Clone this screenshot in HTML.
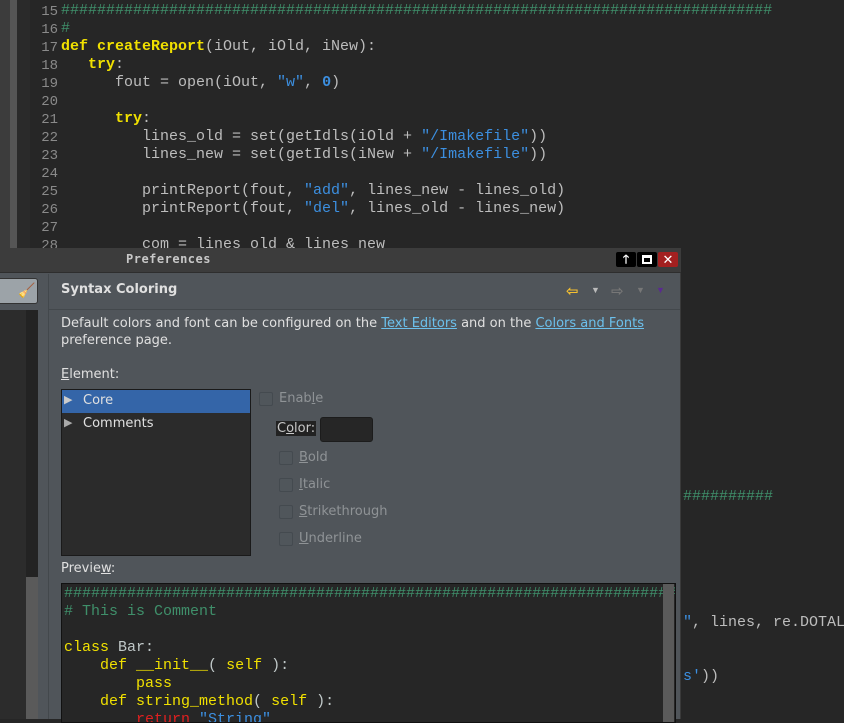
<!DOCTYPE html>
<html><head><meta charset="utf-8"><style>
*{margin:0;padding:0;box-sizing:border-box}
body{width:844px;height:719px;overflow:hidden;background:#262626;position:relative;font-family:"Liberation Sans","DejaVu Sans",sans-serif}
.ab{position:absolute}
.mono{font-family:"Liberation Mono","DejaVu Sans Mono",monospace;font-size:15px;white-space:pre}
.ln{position:absolute;left:30px;width:28px;text-align:right;color:#8a8a8a;font-family:"Liberation Mono",monospace;font-size:14px;line-height:18px}
.code{position:absolute;left:61px;color:#bdbdbd;line-height:18px}
.k{color:#f0e000;font-weight:bold}
.s{color:#3c8fe0}
.c{color:#3f8f6a}
.n{color:#3c8fe0;font-weight:bold}
.dl{font-family:"DejaVu Sans","Liberation Sans",sans-serif;font-size:13px;color:#e0e0e0}
.cb{position:absolute;width:14px;height:14px;border:1px solid #444a4f;border-radius:2px;background:#50565b}
.dis{color:#8f9396}
a{color:#6cc0ec;text-decoration:underline}
.pv{font-family:"Liberation Mono",monospace;font-size:15px;line-height:18px;white-space:pre;color:#c0c8c8}
</style></head><body>
<div class="ab" style="left:0;top:0;width:10px;height:248px;background:#3c3c3c"></div>
<div class="ab" style="left:10px;top:0;width:7px;height:248px;background:#555"></div>
<div class="ab" style="left:17px;top:0;width:13px;height:248px;background:#2a2a2a"></div>
<div class="ln" style="top:3px">15<br>16<br>17<br>18<br>19<br>20<br>21<br>22<br>23<br>24<br>25<br>26<br>27<br>28</div>
<div class="code mono" style="top:2px"><span class="c">###############################################################################</span>
<span class="c">#</span>
<span class="k">def createReport</span>(iOut, iOld, iNew):
   <span class="k">try</span>:
      fout = open(iOut, <span class="s">"w"</span>, <span class="n">0</span>)

      <span class="k">try</span>:
         lines_old = set(getIdls(iOld + <span class="s">"/Imakefile"</span>))
         lines_new = set(getIdls(iNew + <span class="s">"/Imakefile"</span>))

         printReport(fout, <span class="s">"add"</span>, lines_new - lines_old)
         printReport(fout, <span class="s">"del"</span>, lines_old - lines_new)

         com = lines_old &amp; lines_new</div>
<div class="mono ab c" style="left:683px;top:488px;line-height:18px">##########</div>
<div class="mono ab" style="left:683px;top:614px;color:#bdbdbd"><span class="s">"</span>, lines, re.DOTAL</div>
<div class="mono ab" style="left:683px;top:668px;color:#bdbdbd"><span class="s">s'</span>))</div>

<!-- dialog -->
<div class="ab" style="left:0;top:248px;width:681px;height:471px;background:#50555a;border-right:1px solid #3a3a3a"></div>
<div class="ab" style="left:0;top:248px;width:681px;height:25px;background:#3c3c3c;border-bottom:1px solid #2e2e2e"></div>
<div class="ab" style="left:126px;top:252px;font-family:'DejaVu Sans Mono','Liberation Mono',monospace;font-weight:bold;font-size:12px;color:#c8c8c8;letter-spacing:.5px">Preferences</div>
<div class="ab" style="left:616px;top:252px;width:20px;height:15px;background:#000;border-radius:2px;color:#fff;font-size:12px;text-align:center;line-height:15px;font-weight:bold">🡑</div>
<div class="ab" style="left:637px;top:252px;width:20px;height:15px;background:#000;border-radius:2px"><div class="ab" style="left:5px;top:3px;width:10px;height:9px;border:2px solid #fff;border-top-width:3px"></div></div>
<div class="ab" style="left:658px;top:252px;width:20px;height:15px;background:#a32020;border-radius:2px;color:#fff;font-size:13px;font-weight:bold;text-align:center;line-height:15px">✕</div>
<!-- left panel -->
<div class="ab" style="left:0;top:278px;width:38px;height:26px;background:#9ca3a8;border:1px solid #333;border-left:none;border-radius:0 3px 3px 0"></div>
<div class="ab" style="left:18px;top:282px;font-size:14px;color:#e8c020">🧹</div>
<div class="ab" style="left:0;top:310px;width:38px;height:409px;background:#2c2c2c"></div>
<div class="ab" style="left:26px;top:310px;width:12px;height:307px;background:#232323"></div>
<div class="ab" style="left:26px;top:577px;width:12px;height:142px;background:#5a5a5a"></div>
<div class="ab" style="left:48px;top:274px;width:1px;height:445px;background:#43484c"></div>
<!-- header -->
<div class="ab dl" style="left:61px;top:282px;font-weight:bold;font-size:13px">Syntax Coloring</div>
<div class="ab" style="left:49px;top:309px;width:631px;height:1px;background:#43484c"></div>
<div class="ab" style="left:566px;top:282px;color:#f5c030;font-size:15px;font-weight:bold">⇦</div>
<div class="ab" style="left:591px;top:285px;color:#bbb;font-size:9px">▼</div>
<div class="ab" style="left:611px;top:282px;color:#777;font-size:15px;font-weight:bold">⇨</div>
<div class="ab" style="left:636px;top:285px;color:#777;font-size:9px">▼</div>
<div class="ab" style="left:656px;top:285px;color:#5a2a90;font-size:9px">▼</div>
<div class="ab dl" style="left:61px;top:315px;line-height:17px">Default colors and font can be configured on the <a>Text Editors</a> and on the <a>Colors and Fonts</a><br>preference page.</div>
<div class="ab dl" style="left:61px;top:367px"><u>E</u>lement:</div>
<!-- list -->
<div class="ab" style="left:61px;top:389px;width:190px;height:167px;background:#2b2b2b;border:1px solid #1a1a1a"></div>
<div class="ab" style="left:62px;top:390px;width:188px;height:23px;background:#3465a8"></div>
<div class="ab dl" style="left:64px;top:393px;color:#ccc;font-size:11px">▶</div>
<div class="ab dl" style="left:83px;top:393px">Core</div>
<div class="ab dl" style="left:64px;top:416px;color:#aaa;font-size:11px">▶</div>
<div class="ab dl" style="left:83px;top:416px">Comments</div>
<div class="cb" style="left:259px;top:392px"></div>
<div class="ab dl dis" style="left:279px;top:391px">Enab<u>l</u>e</div>
<div class="ab dl" style="left:276px;top:421px;background:#222;color:#c8c8c8;padding:0 1px">C<u>o</u>lor:</div>
<div class="ab" style="left:320px;top:417px;width:53px;height:25px;background:#262626;border:1px solid #1c1c1c;border-radius:3px"></div>
<div class="cb" style="left:279px;top:451px"></div><div class="ab dl dis" style="left:299px;top:450px"><u>B</u>old</div>
<div class="cb" style="left:279px;top:478px"></div><div class="ab dl dis" style="left:299px;top:477px"><u>I</u>talic</div>
<div class="cb" style="left:279px;top:505px"></div><div class="ab dl dis" style="left:299px;top:504px"><u>S</u>trikethrough</div>
<div class="cb" style="left:279px;top:532px"></div><div class="ab dl dis" style="left:299px;top:531px"><u>U</u>nderline</div>
<div class="ab dl" style="left:61px;top:561px">Previe<u>w</u>:</div>
<!-- preview -->
<div class="ab" style="left:61px;top:583px;width:615px;height:140px;background:#262626;border:1px solid #111;overflow:hidden">
<div class="pv" style="position:absolute;left:2px;top:1px"><span class="c">######################################################################</span>
<span class="c"># This is Comment</span>

<span class="k" style="font-weight:normal">class</span> Bar:
    <span class="k" style="font-weight:normal">def __init__</span>( <span class="k" style="font-weight:normal">self</span> ):
        <span class="k" style="font-weight:normal">pass</span>
    <span class="k" style="font-weight:normal">def string_method</span>( <span class="k" style="font-weight:normal">self</span> ):
        <span style="color:#e02020">return</span> <span class="s">"String"</span></div>
<div class="ab" style="left:601px;top:0;width:11px;height:140px;background:#5a5a5a"></div>
</div>
</body></html>
